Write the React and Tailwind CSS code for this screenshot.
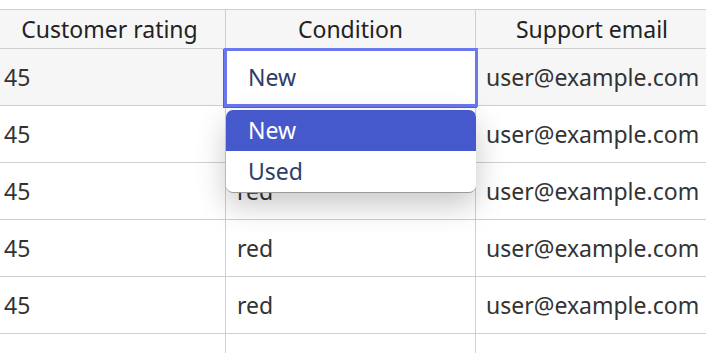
import React from "react";

const rows = [
  { rating: "45", condition: "red", email: "user@example.com" },
  { rating: "45", condition: "red", email: "user@example.com" },
  { rating: "45", condition: "red", email: "user@example.com" },
  { rating: "45", condition: "red", email: "user@example.com" },
  { rating: "45", condition: "red", email: "user@example.com" },
  { rating: "45", condition: "red", email: "user@example.com" },
];

const cols = "grid grid-cols-[232px_250px_232px]";

export default function App() {
  return (
    <div
      className="relative w-[706px] h-[353px] overflow-hidden bg-white pt-[9px] text-[23px] text-[#333]"
      style={{ fontFamily: '"Noto Sans", "Open Sans", sans-serif' }}
    >
      <div className="-ml-[6px] w-[714px] border-t border-[#cfcfcf]">
        <div className={`${cols} h-[39px] bg-[#f6f6f6] border-b border-[#cfcfcf] text-[#222]`}>
          <div className="flex items-center justify-center border-r border-[#cfcfcf]">Customer rating</div>
          <div className="flex items-center justify-center border-r border-[#cfcfcf]">Condition</div>
          <div className="flex items-center justify-center">Support email</div>
        </div>
        {rows.map((row, i) => (
          <div
            key={i}
            className={`${cols} h-[57px] border-b border-[#cfcfcf] ${i === 0 ? "bg-[#f6f6f6]" : "bg-white"}`}
          >
            <div className="flex items-center pl-[10px] border-r border-[#cfcfcf]">{row.rating}</div>
            <div className="flex items-center pl-[11px] border-r border-[#cfcfcf]">{row.condition}</div>
            <div className="flex items-center pl-[10px]">{row.email}</div>
          </div>
        ))}
      </div>

      {/* cell editor */}
      <div className="absolute left-[224px] top-[48px] w-[254px] h-[59px] border-[3px] border-[#6b78ee] bg-white flex items-center pl-[21px] text-[#2f3d6a] shadow-[-1px_1px_0_#5563b8]">
        New
      </div>

      {/* dropdown */}
      <div className="absolute left-[226px] top-[110px] w-[250px] rounded-[7px] bg-white overflow-hidden border-b border-[#9a9a9a] shadow-[0_12px_30px_rgba(0,0,0,0.22)]">
        <div className="h-[41px] flex items-center pl-[22px] bg-[#4659cc] text-white">New</div>
        <div className="h-[41px] flex items-center pl-[22px] text-[#2f3d6a]">Used</div>
      </div>
    </div>
  );
}
